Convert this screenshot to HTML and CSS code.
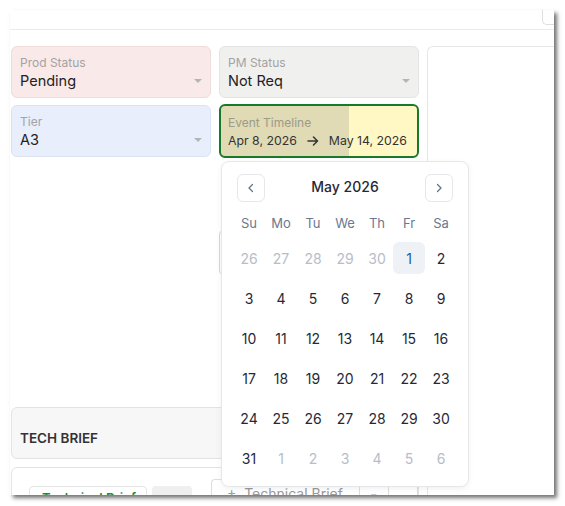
FILE: index.html
```html
<!DOCTYPE html>
<html lang="en-US">
	<head>
		<title>Event Details</title>
		<link rel="stylesheet" href="styles.css">
	</head>
	<body>
		<div class="window">
			<div class="top-bar">
				<div class="top-tab"></div>
			</div>
			<div class="content">
				<div class="left-area">
					<div class="field-grid">
						<div class="field field-pink">
							<span class="field-label">Prod Status</span>
							<span class="field-value">Pending</span>
							<span class="caret"></span>
						</div>
						<div class="field field-gray">
							<span class="field-label">PM Status</span>
							<span class="field-value">Not Req</span>
							<span class="caret"></span>
						</div>
						<div class="field field-blue">
							<span class="field-label">Tier</span>
							<span class="field-value">A3</span>
							<span class="caret"></span>
						</div>
						<div class="date-wrap">
							<div class="field field-date">
								<span class="field-label">Event Timeline</span>
								<span class="date-range">
									<span>Apr 8, 2026</span>
									<svg class="range-arrow" width="12" height="10" viewBox="0 0 12 10">
										<path d="M1 5h9.5M6.5 1l4 4-4 4" fill="none" stroke="#333" stroke-width="1.5" stroke-linecap="round" stroke-linejoin="round"/>
									</svg>
									<span>May 14, 2026</span>
								</span>
							</div>

							<div class="calendar">
								<div class="cal-header">
									<button class="cal-nav">
										<svg width="10" height="10" viewBox="0 0 10 10"><path d="M6.5 1.5L3 5l3.5 3.5" fill="none" stroke="#64748b" stroke-width="1.3" stroke-linecap="round" stroke-linejoin="round"/></svg>
									</button>
									<span class="cal-title">May 2026</span>
									<button class="cal-nav">
										<svg width="10" height="10" viewBox="0 0 10 10"><path d="M3.5 1.5L7 5 3.5 8.5" fill="none" stroke="#64748b" stroke-width="1.3" stroke-linecap="round" stroke-linejoin="round"/></svg>
									</button>
								</div>
								<div class="cal-weekdays">
									<span>Su</span><span>Mo</span><span>Tu</span><span>We</span><span>Th</span><span>Fr</span><span>Sa</span>
								</div>
								<div class="cal-days">
									<span class="muted">26</span><span class="muted">27</span><span class="muted">28</span><span class="muted">29</span><span class="muted">30</span><span class="today">1</span><span>2</span>
									<span>3</span><span>4</span><span>5</span><span>6</span><span>7</span><span>8</span><span>9</span>
									<span>10</span><span>11</span><span>12</span><span>13</span><span>14</span><span>15</span><span>16</span>
									<span>17</span><span>18</span><span>19</span><span>20</span><span>21</span><span>22</span><span>23</span>
									<span>24</span><span>25</span><span>26</span><span>27</span><span>28</span><span>29</span><span>30</span>
									<span>31</span><span class="muted">1</span><span class="muted">2</span><span class="muted">3</span><span class="muted">4</span><span class="muted">5</span><span class="muted">6</span>
								</div>
							</div>
						</div>
						<div></div>
						<div class="field field-hidden"></div>
					</div>

					<div class="section-head">TECH BRIEF</div>
					<div class="section-body">
						<div class="brief-tab">Technical Brief</div>
						<div class="brief-blank"></div>
						<div class="brief-group">
							<span class="brief-add">+&nbsp; Technical Brief</span>
							<span class="brief-seg">&#9662;</span>
							<span class="brief-seg"></span>
						</div>
					</div>
				</div>
				<div class="right-panel"></div>
			</div>
		</div>
	</body>
</html>
```

FILE: styles.css
```css
* {
	box-sizing: border-box;
	font-family: Inter, "Noto Sans", sans-serif;
}
body {
	margin: 0;
	padding: 10px;
	background: #ffffff;
}

.window {
	width: 544px;
	height: 485px;
	background: #ffffff;
	overflow: hidden;
	box-shadow: 3px 3px 4px rgba(0, 0, 0, 0.55);
}

.top-bar {
	height: 20px;
	border-bottom: 1px solid #ececec;
	display: flex;
	justify-content: flex-end;
}
.top-tab {
	width: 12px;
	height: 15px;
	border: 1px solid #dedede;
	border-top: 0;
	border-right: 0;
	border-bottom-left-radius: 5px;
}

.content {
	display: flex;
	padding: 16px 0 0 1px;
	height: 465px;
}
.left-area {
	width: 408px;
	flex-shrink: 0;
}
.right-panel {
	flex: 1;
	margin-left: 8px;
	border-top: 1px solid #e6e6e6;
	border-left: 1px solid #e6e6e6;
	border-top-left-radius: 6px;
}

.field-grid {
	display: grid;
	grid-template-columns: 200px 200px;
	column-gap: 8px;
	row-gap: 7px;
	align-items: start;
}

.field {
	position: relative;
	height: 52px;
	border-radius: 6px;
	border: 1px solid transparent;
	padding: 8px 8px 0;
	display: flex;
	flex-direction: column;
}
.field-label {
	font-size: 12px;
	line-height: 16px;
	color: #a3a3a3;
}
.field-value {
	font-size: 14.5px;
	line-height: 20px;
	color: #222222;
}
.caret {
	position: absolute;
	right: 8px;
	top: 32px;
	border-left: 4px solid transparent;
	border-right: 4px solid transparent;
	border-top: 4px solid #b5b5b5;
}

.field-pink {
	background: #f9e9e9;
	border-color: #f0dcdc;
}
.field-gray {
	background: #f0f0ef;
	border-color: #e4e4e3;
}
.field-blue {
	background: #e8eefb;
	border-color: #dbe3f2;
}

.date-wrap {
	position: relative;
}
.field-date {
	height: 54px;
	margin: -1px 0 0;
	border: 2px solid #177a2b;
	background: linear-gradient(to right, #e0dbb5 0, #e0dbb5 128px, #fff8c5 128px);
	padding: 9px 7px 0;
}
.field-date .field-label {
	color: #9c9a88;
	line-height: 16px;
}
.date-range {
	display: flex;
	align-items: center;
	gap: 10px;
	white-space: nowrap;
	font-size: 12.3px;
	line-height: 20px;
	color: #333333;
}
.range-arrow {
	flex-shrink: 0;
}

.calendar {
	position: absolute;
	top: 56px;
	left: 2px;
	width: 248px;
	height: 326px;
	background: #ffffff;
	border: 1px solid #e5e7eb;
	border-radius: 8px;
	box-shadow: 0 2px 6px rgba(0, 0, 0, 0.06);
	padding: 12px 11px;
	z-index: 2;
}
.cal-header {
	display: flex;
	align-items: center;
	justify-content: space-between;
	padding: 0 4px;
	height: 28px;
}
.cal-nav {
	width: 28px;
	height: 28px;
	border: 1px solid #e5e7eb;
	border-radius: 6px;
	background: #ffffff;
	padding: 0;
	display: flex;
	align-items: center;
	justify-content: center;
}
.cal-title {
	font-size: 14px;
	font-weight: 500;
	line-height: 18px;
	margin-top: -2px;
	color: #1f2937;
}
.cal-weekdays {
	display: grid;
	grid-template-columns: repeat(7, 32px);
	margin: 11px 0 9px;
	height: 20px;
	align-items: center;
}
.cal-weekdays span {
	text-align: center;
	font-size: 13px;
	color: #6b7890;
}
.cal-days {
	display: grid;
	grid-template-columns: repeat(7, 32px);
	grid-auto-rows: 32px;
	row-gap: 8px;
}
.cal-days span {
	display: flex;
	align-items: center;
	justify-content: center;
	font-size: 14px;
	color: #1f2937;
	border-radius: 6px;
}
.cal-days .muted {
	color: #b6bdc9;
}
.cal-days .today {
	background: #eef2f7;
	color: #1d5fa6;
}

.field-hidden {
	margin-top: 64px;
	height: 47px;
	background: #ffffff;
	border-color: #d6d6d6;
}

.section-head {
	margin-top: 131px;
	height: 52px;
	background: #f7f7f7;
	border: 1px solid #e3e3e3;
	border-radius: 6px;
	padding: 20px 8px 0;
	font-size: 13.5px;
	font-weight: 600;
	line-height: 20px;
	color: #333333;
}
.section-body {
	margin-top: 8px;
	height: 60px;
	border: 1px solid #e3e3e3;
	border-radius: 6px;
	display: flex;
	align-items: flex-start;
	padding-left: 17px;
}
.brief-tab {
	margin-top: 18px;
	width: 118px;
	height: 28px;
	border: 1px solid #e5e5e5;
	border-radius: 4px;
	font-size: 13px;
	font-weight: 600;
	line-height: 16px;
	color: #1f8a3a;
	padding: 3px 0 0 12px;
}
.brief-blank {
	margin: 18px 0 0 5px;
	width: 40px;
	height: 28px;
	background: #efefef;
	border-radius: 4px;
}
.brief-group {
	margin: 11px 0 0 19px;
	height: 30px;
	display: flex;
	border: 1px solid #dddddd;
	border-right: 0;
	border-radius: 4px 0 0 4px;
	font-size: 14px;
	color: #9a9a9a;
}
.brief-add {
	width: 148px;
	padding: 5px 0 0 15px;
	border-right: 1px solid #dddddd;
}
.brief-seg {
	width: 29px;
	border-right: 1px solid #dddddd;
	text-align: center;
	font-size: 11px;
	padding-top: 9px;
}
```
